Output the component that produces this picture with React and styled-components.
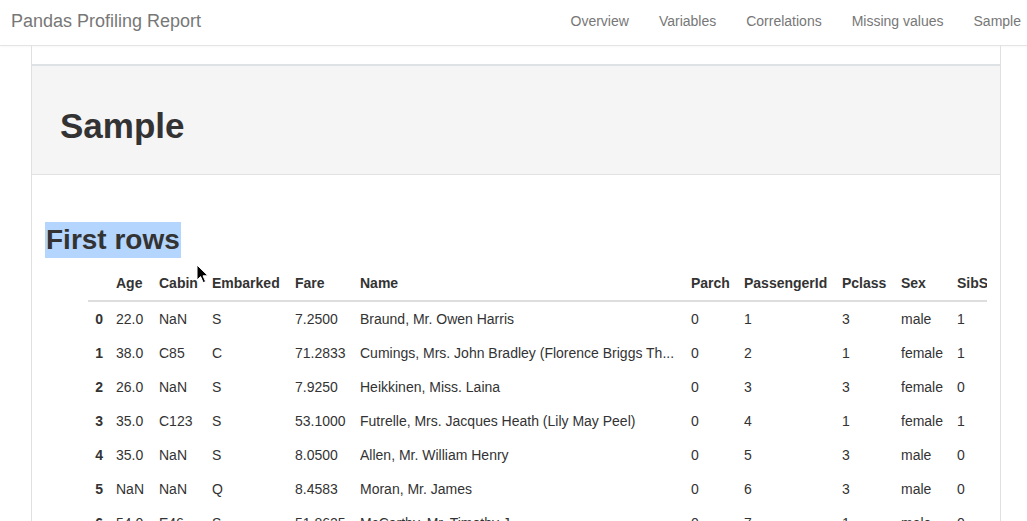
import React from 'react'
import styled, { createGlobalStyle } from 'styled-components'

const GlobalStyle = createGlobalStyle`
  html, body {
    margin: 0;
    padding: 0;
    background: #fff;
    overflow: hidden;
  }
  body {
    font-family: "Liberation Sans", Arial, Helvetica, sans-serif;
    color: #333;
  }
`

const columns = [
  { key: 'Age', width: 43 },
  { key: 'Cabin', width: 53 },
  { key: 'Embarked', width: 83 },
  { key: 'Fare', width: 65 },
  { key: 'Name', width: 331 },
  { key: 'Parch', width: 53 },
  { key: 'PassengerId', width: 98 },
  { key: 'Pclass', width: 59 },
  { key: 'Sex', width: 56 },
  { key: 'SibSp', width: 62 },
]

const rows = [
  ['22.0', 'NaN', 'S', '7.2500', 'Braund, Mr. Owen Harris', '0', '1', '3', 'male', '1'],
  ['38.0', 'C85', 'C', '71.2833', 'Cumings, Mrs. John Bradley (Florence Briggs Th...', '0', '2', '1', 'female', '1'],
  ['26.0', 'NaN', 'S', '7.9250', 'Heikkinen, Miss. Laina', '0', '3', '3', 'female', '0'],
  ['35.0', 'C123', 'S', '53.1000', 'Futrelle, Mrs. Jacques Heath (Lily May Peel)', '0', '4', '1', 'female', '1'],
  ['35.0', 'NaN', 'S', '8.0500', 'Allen, Mr. William Henry', '0', '5', '3', 'male', '0'],
  ['NaN', 'NaN', 'Q', '8.4583', 'Moran, Mr. James', '0', '6', '3', 'male', '0'],
  ['54.0', 'E46', 'S', '51.8625', 'McCarthy, Mr. Timothy J', '0', '7', '1', 'male', '0'],
]

const navLinks = ['Overview', 'Variables', 'Correlations', 'Missing values', 'Sample']

function Cursor() {
  return (
    <CursorMark width="13" height="20" viewBox="0 0 13 20">
      <path
        d="M1 1 L1 16 L4.6 12.6 L7.2 18.6 L9.6 17.6 L7 11.8 L12 11.8 Z"
        fill="#000"
        stroke="#fff"
        strokeWidth="1"
        strokeLinejoin="round"
      />
    </CursorMark>
  )
}

export default function App() {
  return (
    <>
      <GlobalStyle />
      <Navbar>
        <Brand>Pandas Profiling Report</Brand>
        <NavList>
          {navLinks.map((l) => (
            <NavItem key={l}>{l}</NavItem>
          ))}
        </NavList>
      </Navbar>
      <Page>
        <TopStrip />
        <SectionHeader>
          <SectionTitle>Sample</SectionTitle>
        </SectionHeader>
        <SectionBody>
          <SubTitle>
            <Selected>First rows</Selected>
          </SubTitle>
          <TableWrap>
            <Table>
              <colgroup>
                <col style={{ width: 28 }} />
                {columns.map((c) => (
                  <col key={c.key} style={{ width: c.width }} />
                ))}
              </colgroup>
              <thead>
                <tr>
                  <Th />
                  {columns.map((c) => (
                    <Th key={c.key}>{c.key}</Th>
                  ))}
                </tr>
              </thead>
              <tbody>
                {rows.map((r, i) => (
                  <tr key={i}>
                    <IndexCell>{i}</IndexCell>
                    {r.map((v, j) => (
                      <Td key={j}>{v}</Td>
                    ))}
                  </tr>
                ))}
              </tbody>
            </Table>
          </TableWrap>
          <Cursor />
        </SectionBody>
      </Page>
    </>
  )
}

const Navbar = styled.div`
  height: 46px;
  box-sizing: border-box;
  border-bottom: 1px solid #e4e4e4;
  display: flex;
  align-items: flex-start;
  padding-top: 10px;
  background: #fff;
  overflow: hidden;
  white-space: nowrap;
  box-shadow: 0 1px 2px rgba(0, 0, 0, 0.03);
`

const Brand = styled.div`
  font-size: 18px;
  line-height: 22px;
  color: #777;
  padding-left: 11px;
`

const NavList = styled.div`
  display: flex;
  margin-left: auto;
  margin-right: -9px;
  flex-shrink: 0;
`

const NavItem = styled.div`
  font-size: 14px;
  line-height: 22px;
  color: #777;
  padding: 0 15px;
`

const Page = styled.div`
  margin-left: 31px;
  width: 970px;
  border-left: 1px solid #e0e0e0;
  border-right: 1px solid #e0e0e0;
  box-sizing: border-box;
  height: 480px;
`

const TopStrip = styled.div`
  height: 18px;
  border-bottom: 2px solid #dee2e5;
`

const SectionHeader = styled.div`
  height: 108px;
  background: #f6f5f6;
  border-bottom: 1px solid #e2e2e2;
  display: flex;
  align-items: center;
  padding-left: 28px;
`

const SectionTitle = styled.h1`
  margin: 0;
  font-size: 35px;
  font-weight: bold;
  color: #333;
  line-height: 40px;
  position: relative;
  top: 6px;
`

const SectionBody = styled.div`
  position: relative;
  padding: 46px 13px 0 14px;
`

const SubTitle = styled.h2`
  margin: 0 0 9px 0;
  font-size: 28px;
  font-weight: bold;
  color: #333;
  line-height: 36px;
  height: 36px;
`

const Selected = styled.span`
  display: inline-block;
  background: #b4d5fe;
  line-height: 36px;
  padding: 0 1px 0 1px;
  margin-left: -1px;
  position: relative;
  top: 1px;
`

const TableWrap = styled.div`
  margin-left: 42px;
  margin-top: 1px;
  overflow: hidden;
`

const Table = styled.table`
  border-collapse: collapse;
  table-layout: fixed;
  width: 931px;
  font-size: 14px;
  color: #333;
`

const Th = styled.th`
  text-align: left;
  font-weight: bold;
  height: 34px;
  padding: 0;
  vertical-align: middle;
  border-bottom: 2px solid #dddddd;
  white-space: nowrap;
  overflow: hidden;
`

const Td = styled.td`
  height: 34px;
  padding: 0;
  vertical-align: middle;
  white-space: nowrap;
  overflow: hidden;
`

const IndexCell = styled(Td)`
  font-weight: bold;
  text-align: right;
  padding-right: 13px;
`

const CursorMark = styled.svg`
  position: absolute;
  left: 164px;
  top: 89px;
  pointer-events: none;
`
